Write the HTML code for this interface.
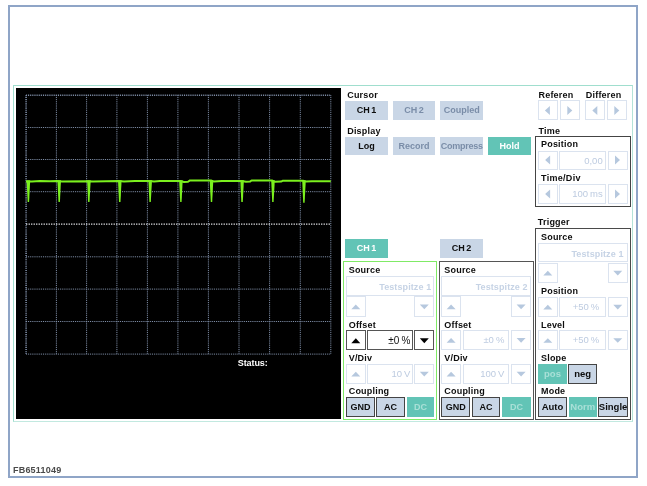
<!DOCTYPE html>
<html><head><meta charset="utf-8"><title>Oscilloscope</title>
<style>
html,body{margin:0;padding:0;background:#fff;}
body{width:647px;height:486px;position:relative;overflow:hidden;font-family:"Liberation Sans",sans-serif;font-weight:bold;}
div{position:absolute;}
.t{white-space:nowrap;letter-spacing:0.2px;}
#w{left:0;top:0;width:647px;height:486px;will-change:transform;}
.b{text-align:center;white-space:nowrap;overflow:hidden;word-spacing:-1px;}
.f{font-weight:normal;white-space:nowrap;overflow:hidden;word-spacing:-0.6px;}
u{text-decoration:underline;}
svg{position:absolute;left:0;top:0;}
</style></head><body><div id="w">
<div style="left:8px;top:5px;width:630px;height:473px;border:2px solid #8fa5c7;box-sizing:border-box;"></div>
<div style="left:13px;top:85px;width:620px;height:337px;border:1px solid #a0dece;border-right-color:#b4e3d8;border-bottom-color:#c2e9e0;box-sizing:border-box;"></div>
<div style="left:16px;top:88px;width:325.2px;height:331.3px;background:#000;"></div>
<div class="t" style="left:347.2px;top:90.98px;font-size:9px;line-height:9px;height:9px;color:#0d0d0d;">Cursor</div>
<div class="b" style="left:345px;top:101px;width:43px;height:18.5px;background:#c9d6e6;color:#0d0d0d;font-size:9px;line-height:19.1px;">CH 1</div>
<div class="b" style="left:392.7px;top:101px;width:42.5px;height:18.5px;background:#c9d6e6;color:#7a8da8;font-size:9px;line-height:19.1px;">CH 2</div>
<div class="b" style="left:440.3px;top:101px;width:43px;height:18.5px;background:#c9d6e6;color:#7a8da8;font-size:9px;line-height:19.1px;">Coupled</div>
<div class="t" style="left:347.2px;top:126.58px;font-size:9px;line-height:9px;height:9px;color:#0d0d0d;">Display</div>
<div class="b" style="left:345px;top:136.5px;width:43px;height:18.2px;background:#c9d6e6;color:#0d0d0d;font-size:9px;line-height:18.8px;">Log</div>
<div class="b" style="left:392.7px;top:136.5px;width:42.5px;height:18.2px;background:#c9d6e6;color:#7a8da8;font-size:9px;line-height:18.8px;">Record</div>
<div class="b" style="left:440.3px;top:136.5px;width:43px;height:18.2px;background:#c9d6e6;color:#7a8da8;font-size:9px;line-height:18.8px;letter-spacing:-0.25px;">Compress</div>
<div class="b" style="left:488px;top:136.5px;width:43px;height:18.2px;background:#62c4b6;color:#fff;font-size:9px;line-height:18.8px;">Hold</div>
<div class="t" style="left:538.5px;top:90.68px;font-size:9px;line-height:9px;height:9px;color:#0d0d0d;">Referen</div>
<div class="t" style="left:585.8px;top:90.68px;font-size:9px;line-height:9px;height:9px;color:#0d0d0d;">Differen</div>
<div style="left:537.6px;top:100.4px;width:20.2px;height:20px;background:#fff;box-shadow:inset 0 0 0 1px #dbe3ef;"></div>
<div style="left:560.2px;top:100.4px;width:19.8px;height:20px;background:#fff;box-shadow:inset 0 0 0 1px #dbe3ef;"></div>
<div style="left:585.3px;top:100.4px;width:19.6px;height:20px;background:#fff;box-shadow:inset 0 0 0 1px #dbe3ef;"></div>
<div style="left:607.4px;top:100.4px;width:19.4px;height:20px;background:#fff;box-shadow:inset 0 0 0 1px #dbe3ef;"></div>
<div class="t" style="left:538.5px;top:126.78px;font-size:9px;line-height:9px;height:9px;color:#0d0d0d;">Time</div>
<div style="left:535px;top:136px;width:95.7px;height:70.8px;box-shadow:inset 0 0 0 1px #444;"></div>
<div class="t" style="left:541px;top:140.28px;font-size:9px;line-height:9px;height:9px;color:#0d0d0d;">Position</div>
<div style="left:538px;top:150.5px;width:19.8px;height:19px;background:#fff;box-shadow:inset 0 0 0 1px #dbe3ef;"></div>
<div class="f" style="left:559.4px;top:150.5px;width:46.3px;height:19px;background:#fff;box-shadow:inset 0 0 0 1px #dbe3ef;color:#bdcbe0;font-size:9.5px;line-height:19.4px;text-align:right;padding-right:3px;box-sizing:border-box;">0,00</div>
<div style="left:608px;top:150.5px;width:19.6px;height:19px;background:#fff;box-shadow:inset 0 0 0 1px #dbe3ef;"></div>
<div class="t" style="left:541px;top:174.18px;font-size:9px;line-height:9px;height:9px;color:#0d0d0d;letter-spacing:0.3px;">Time/Div</div>
<div style="left:538px;top:184.3px;width:19.8px;height:19.3px;background:#fff;box-shadow:inset 0 0 0 1px #dbe3ef;"></div>
<div class="f" style="left:559.4px;top:184.3px;width:46.3px;height:19.3px;background:#fff;box-shadow:inset 0 0 0 1px #dbe3ef;color:#bdcbe0;font-size:9.5px;line-height:19.7px;text-align:right;padding-right:3px;box-sizing:border-box;">100 ms</div>
<div style="left:608px;top:184.3px;width:19.6px;height:19.3px;background:#fff;box-shadow:inset 0 0 0 1px #dbe3ef;"></div>
<div class="t" style="left:537.8px;top:218.28px;font-size:9px;line-height:9px;height:9px;color:#0d0d0d;">Trigger</div>
<div style="left:535px;top:228px;width:96px;height:191.7px;box-shadow:inset 0 0 0 1px #4a4a4a;"></div>
<div class="t" style="left:541px;top:232.88px;font-size:9px;line-height:9px;height:9px;color:#0d0d0d;">Source</div>
<div class="f" style="left:538px;top:243px;width:89.5px;height:19.3px;background:#fff;box-shadow:inset 0 0 0 1px #dbe3ef;color:#bdcbe0;font-size:9px;line-height:19.7px;text-align:right;padding-right:4px;box-sizing:border-box;font-weight:bold;color:#c6d3e5;word-spacing:0;letter-spacing:0.1px;line-height:23px;">Testspitze 1</div>
<div style="left:538px;top:263px;width:19.6px;height:20px;background:#fff;box-shadow:inset 0 0 0 1px #dbe3ef;"></div>
<div style="left:608px;top:263px;width:19.5px;height:20px;background:#fff;box-shadow:inset 0 0 0 1px #dbe3ef;"></div>
<div class="t" style="left:541px;top:287.28px;font-size:9px;line-height:9px;height:9px;color:#0d0d0d;">Position</div>
<div style="left:538px;top:297px;width:19.6px;height:20px;background:#fff;box-shadow:inset 0 0 0 1px #dbe3ef;"></div>
<div class="f" style="left:559.4px;top:297px;width:46.4px;height:20px;background:#fff;box-shadow:inset 0 0 0 1px #dbe3ef;color:#bdcbe0;font-size:9.5px;line-height:20.4px;text-align:right;padding-right:6.5px;box-sizing:border-box;">+50 %</div>
<div style="left:608px;top:297px;width:19.5px;height:20px;background:#fff;box-shadow:inset 0 0 0 1px #dbe3ef;"></div>
<div class="t" style="left:541px;top:321.08px;font-size:9px;line-height:9px;height:9px;color:#0d0d0d;">Level</div>
<div style="left:538px;top:330.4px;width:19.6px;height:20px;background:#fff;box-shadow:inset 0 0 0 1px #dbe3ef;"></div>
<div class="f" style="left:559.4px;top:330.4px;width:46.4px;height:20px;background:#fff;box-shadow:inset 0 0 0 1px #dbe3ef;color:#bdcbe0;font-size:9.5px;line-height:20.4px;text-align:right;padding-right:6.5px;box-sizing:border-box;">+50 %</div>
<div style="left:608px;top:330.4px;width:19.5px;height:20px;background:#fff;box-shadow:inset 0 0 0 1px #dbe3ef;"></div>
<div class="t" style="left:541px;top:353.88px;font-size:9px;line-height:9px;height:9px;color:#0d0d0d;">Slope</div>
<div class="b" style="left:538.2px;top:364.3px;width:28.6px;height:19.6px;background:#62c4b6;color:#a9e0d7;font-size:9.5px;line-height:20.6px;">pos</div>
<div class="b" style="left:568.3px;top:364.3px;width:28.6px;height:19.6px;background:#c9d6e6;color:#0d0d0d;font-size:9.5px;line-height:20.6px;box-shadow:inset 0 0 0 1px #444;">neg</div>
<div class="t" style="left:541px;top:387.28px;font-size:9px;line-height:9px;height:9px;color:#0d0d0d;">Mode</div>
<div class="b" style="left:538.2px;top:397.3px;width:28.7px;height:20px;background:#c9d6e6;color:#0d0d0d;font-size:9.5px;line-height:20.6px;box-shadow:inset 0 0 0 1px #444;">Auto</div>
<div class="b" style="left:568.6px;top:397.3px;width:28.2px;height:20px;background:#62c4b6;color:#a9e0d7;font-size:9.5px;line-height:20.6px;">Norm</div>
<div class="b" style="left:598.4px;top:397.3px;width:29.4px;height:20px;background:#c9d6e6;color:#0d0d0d;font-size:9.5px;line-height:20.6px;box-shadow:inset 0 0 0 1px #444;">Single</div>
<div class="b" style="left:345px;top:239px;width:43px;height:18.8px;background:#62c4b6;color:#fff;font-size:9px;line-height:18.8px;">CH 1</div>
<div class="b" style="left:440.2px;top:239px;width:42.6px;height:18.8px;background:#c9d6e6;color:#0d0d0d;font-size:9px;line-height:18.8px;">CH 2</div>
<div style="left:343.2px;top:261.3px;width:94px;height:158.6px;box-shadow:inset 0 0 0 1px #80ea66;"></div>
<div class="t" style="left:348.7px;top:266.08px;font-size:9px;line-height:9px;height:9px;color:#0d0d0d;">Source</div>
<div class="f" style="left:346px;top:276.2px;width:88.3px;height:19.8px;background:#fff;box-shadow:inset 0 0 0 1px #dbe3ef;color:#bdcbe0;font-size:9px;line-height:20.2px;text-align:right;padding-right:3.0px;box-sizing:border-box;font-weight:bold;color:#c6d3e5;word-spacing:0;letter-spacing:0.1px;line-height:22px;">Testspitze 1</div>
<div style="left:346px;top:296.4px;width:19.6px;height:20.6px;background:#fff;box-shadow:inset 0 0 0 1px #dbe3ef;"></div>
<div style="left:414.4px;top:296.4px;width:19.8px;height:20.6px;background:#fff;box-shadow:inset 0 0 0 1px #dbe3ef;"></div>
<div class="t" style="left:348.7px;top:320.88px;font-size:9px;line-height:9px;height:9px;color:#0d0d0d;">Offset</div>
<div style="left:346px;top:330.2px;width:19.6px;height:20px;background:#fff;box-shadow:inset 0 0 0 1px #555;"></div>
<div class="f" style="left:367.4px;top:330.2px;width:45.6px;height:20px;background:#fff;box-shadow:inset 0 0 0 1px #555;color:#111;font-size:10px;line-height:22.2px;text-align:right;padding-right:2.6px;box-sizing:border-box;">±0 %</div>
<div style="left:414.4px;top:330.2px;width:19.8px;height:20px;background:#fff;box-shadow:inset 0 0 0 1px #555;"></div>
<div class="t" style="left:348.7px;top:353.88px;font-size:9px;line-height:9px;height:9px;color:#0d0d0d;">V/Div</div>
<div style="left:346px;top:364px;width:19.6px;height:20px;background:#fff;box-shadow:inset 0 0 0 1px #dbe3ef;"></div>
<div class="f" style="left:367.4px;top:364px;width:45.6px;height:20px;background:#fff;box-shadow:inset 0 0 0 1px #dbe3ef;color:#bdcbe0;font-size:9.5px;line-height:20.4px;text-align:right;padding-right:2.6px;box-sizing:border-box;">10 V</div>
<div style="left:414.4px;top:364px;width:19.8px;height:20px;background:#fff;box-shadow:inset 0 0 0 1px #dbe3ef;"></div>
<div class="t" style="left:348.7px;top:387.28px;font-size:9px;line-height:9px;height:9px;color:#0d0d0d;">Coupling</div>
<div class="b" style="left:346px;top:397.2px;width:28.8px;height:19.8px;background:#c9d6e6;color:#0d0d0d;font-size:9px;line-height:20.8px;box-shadow:inset 0 0 0 1px #444;">GND</div>
<div class="b" style="left:376.2px;top:397.2px;width:28.8px;height:19.8px;background:#c9d6e6;color:#0d0d0d;font-size:9px;line-height:20.8px;box-shadow:inset 0 0 0 1px #444;">AC</div>
<div class="b" style="left:406.8px;top:397.2px;width:27.5px;height:19.8px;background:#62c4b6;color:#a9e0d7;font-size:9px;line-height:20.8px;">DC</div>
<div style="left:438.8px;top:261.3px;width:94.8px;height:158.6px;box-shadow:inset 0 0 0 1px #555;"></div>
<div class="t" style="left:444.3px;top:266.08px;font-size:9px;line-height:9px;height:9px;color:#0d0d0d;">Source</div>
<div class="f" style="left:441.4px;top:276.2px;width:89.6px;height:19.8px;background:#fff;box-shadow:inset 0 0 0 1px #dbe3ef;color:#bdcbe0;font-size:9px;line-height:20.2px;text-align:right;padding-right:3.3px;box-sizing:border-box;font-weight:bold;color:#c6d3e5;word-spacing:0;letter-spacing:0.1px;line-height:22px;">Testspitze 2</div>
<div style="left:441.4px;top:296.4px;width:19.4px;height:20.6px;background:#fff;box-shadow:inset 0 0 0 1px #dbe3ef;"></div>
<div style="left:511.3px;top:296.4px;width:19.6px;height:20.6px;background:#fff;box-shadow:inset 0 0 0 1px #dbe3ef;"></div>
<div class="t" style="left:444.3px;top:320.88px;font-size:9px;line-height:9px;height:9px;color:#0d0d0d;">Offset</div>
<div style="left:441.4px;top:330.2px;width:19.4px;height:20px;background:#fff;box-shadow:inset 0 0 0 1px #dbe3ef;"></div>
<div class="f" style="left:463px;top:330.2px;width:46.2px;height:20px;background:#fff;box-shadow:inset 0 0 0 1px #dbe3ef;color:#bdcbe0;font-size:9.5px;line-height:20.4px;text-align:right;padding-right:4.8px;box-sizing:border-box;">±0 %</div>
<div style="left:511.3px;top:330.2px;width:19.6px;height:20px;background:#fff;box-shadow:inset 0 0 0 1px #dbe3ef;"></div>
<div class="t" style="left:444.3px;top:353.88px;font-size:9px;line-height:9px;height:9px;color:#0d0d0d;">V/Div</div>
<div style="left:441.4px;top:364px;width:19.4px;height:20px;background:#fff;box-shadow:inset 0 0 0 1px #dbe3ef;"></div>
<div class="f" style="left:463px;top:364px;width:46.2px;height:20px;background:#fff;box-shadow:inset 0 0 0 1px #dbe3ef;color:#bdcbe0;font-size:9.5px;line-height:20.4px;text-align:right;padding-right:4.8px;box-sizing:border-box;">100 V</div>
<div style="left:511.3px;top:364px;width:19.6px;height:20px;background:#fff;box-shadow:inset 0 0 0 1px #dbe3ef;"></div>
<div class="t" style="left:444.3px;top:387.28px;font-size:9px;line-height:9px;height:9px;color:#0d0d0d;">Coupling</div>
<div class="b" style="left:441.4px;top:397.2px;width:28.8px;height:19.8px;background:#c9d6e6;color:#0d0d0d;font-size:9px;line-height:20.8px;box-shadow:inset 0 0 0 1px #444;">GND</div>
<div class="b" style="left:471.59999999999997px;top:397.2px;width:28.8px;height:19.8px;background:#c9d6e6;color:#0d0d0d;font-size:9px;line-height:20.8px;box-shadow:inset 0 0 0 1px #444;">AC</div>
<div class="b" style="left:502.2px;top:397.2px;width:28.80000000000001px;height:19.8px;background:#62c4b6;color:#a9e0d7;font-size:9px;line-height:20.8px;">DC</div>
<div class="t" style="left:237.8px;top:359.08px;font-size:9px;line-height:9px;height:9px;color:#fff;letter-spacing:-0.1px;">Status:</div>
<div class="t" style="left:13px;top:466.28px;font-size:9px;line-height:9px;height:9px;color:#4a4a4a;letter-spacing:0.2px;">FB6511049</div>
<svg width="647" height="486" viewBox="0 0 647 486">
<line x1="26.10" y1="95.2" x2="26.10" y2="354.1" stroke="#8797b2" stroke-width="1.5" stroke-dasharray="0.94 0.94"/>
<line x1="56.40" y1="95.2" x2="56.40" y2="354.1" stroke="#8797b2" stroke-width="1.0" stroke-dasharray="0.94 0.94"/>
<line x1="86.60" y1="95.2" x2="86.60" y2="354.1" stroke="#8797b2" stroke-width="1.0" stroke-dasharray="0.94 0.94"/>
<line x1="116.90" y1="95.2" x2="116.90" y2="354.1" stroke="#8797b2" stroke-width="1.0" stroke-dasharray="0.94 0.94"/>
<line x1="147.40" y1="95.2" x2="147.40" y2="354.1" stroke="#8797b2" stroke-width="1.0" stroke-dasharray="0.94 0.94"/>
<line x1="177.90" y1="95.2" x2="177.90" y2="354.1" stroke="#8797b2" stroke-width="1.0" stroke-dasharray="0.94 0.94"/>
<line x1="208.40" y1="95.2" x2="208.40" y2="354.1" stroke="#8797b2" stroke-width="1.0" stroke-dasharray="0.94 0.94"/>
<line x1="239.00" y1="95.2" x2="239.00" y2="354.1" stroke="#8797b2" stroke-width="1.0" stroke-dasharray="0.94 0.94"/>
<line x1="269.60" y1="95.2" x2="269.60" y2="354.1" stroke="#8797b2" stroke-width="1.0" stroke-dasharray="0.94 0.94"/>
<line x1="300.30" y1="95.2" x2="300.30" y2="354.1" stroke="#8797b2" stroke-width="1.0" stroke-dasharray="0.94 0.94"/>
<line x1="330.80" y1="95.2" x2="330.80" y2="354.1" stroke="#8797b2" stroke-width="1.0" stroke-dasharray="0.94 0.94"/>
<line x1="26.1" y1="95.20" x2="330.8" y2="95.20" stroke="#8797b2" stroke-width="1.4" stroke-dasharray="0.94 0.94"/>
<line x1="26.1" y1="127.50" x2="330.8" y2="127.50" stroke="#8797b2" stroke-width="1.0" stroke-dasharray="0.94 0.94"/>
<line x1="26.1" y1="159.50" x2="330.8" y2="159.50" stroke="#8797b2" stroke-width="1.0" stroke-dasharray="0.94 0.94"/>
<line x1="26.1" y1="191.70" x2="330.8" y2="191.70" stroke="#8797b2" stroke-width="1.0" stroke-dasharray="0.94 0.94"/>
<line x1="26.1" y1="224.10" x2="330.8" y2="224.10" stroke="#f2f4f8" stroke-width="1.2" stroke-dasharray="1.25 1.25"/>
<line x1="26.1" y1="256.80" x2="330.8" y2="256.80" stroke="#8797b2" stroke-width="1.0" stroke-dasharray="0.94 0.94"/>
<line x1="26.1" y1="289.10" x2="330.8" y2="289.10" stroke="#8797b2" stroke-width="1.0" stroke-dasharray="0.94 0.94"/>
<line x1="26.1" y1="321.50" x2="330.8" y2="321.50" stroke="#8797b2" stroke-width="1.0" stroke-dasharray="0.94 0.94"/>
<line x1="26.1" y1="354.10" x2="330.8" y2="354.10" stroke="#8797b2" stroke-width="1.0" stroke-dasharray="0.94 0.94"/>
<path d="M26,181.4 L32,181.6 L40,181.0 L50,181.3 L57,181.0 L62,181.5 L88,181.2 L93,181.5 L119,181.1 L124,181.4 L135,181.0 L150,181.0 L154,181.6 L160,181.1 L180,181.0 L184,182.0 L188,181.8 L190,180.4 L211,180.4 L214,181.6 L222,181.0 L242,181.0 L246,181.8 L250,181.6 L251.5,180.5 L272,180.5 L275,181.8 L281,181.6 L282.5,180.8 L303,180.8 L306,181.6 L312,181.2 L330.8,181.2" fill="none" stroke="#7bf01e" stroke-width="2.0" stroke-linejoin="round"/>
<polygon points="26.6,180.2 30.2,180.2 29.1,202.0 27.7,202.0" fill="#7bf01e"/>
<polygon points="57.4,180.2 61.0,180.2 59.9,202.0 58.5,202.0" fill="#7bf01e"/>
<polygon points="87.1,180.2 90.7,180.2 89.5,202.0 88.1,202.0" fill="#7bf01e"/>
<polygon points="118.0,180.2 121.6,180.2 120.5,202.0 119.0,202.0" fill="#7bf01e"/>
<polygon points="148.4,180.2 152.0,180.2 150.8,202.0 149.4,202.0" fill="#7bf01e"/>
<polygon points="179.1,180.2 182.7,180.2 181.6,202.0 180.2,202.0" fill="#7bf01e"/>
<polygon points="209.7,180.2 213.3,180.2 212.2,202.0 210.8,202.0" fill="#7bf01e"/>
<polygon points="240.3,180.2 243.9,180.2 242.8,202.0 241.3,202.0" fill="#7bf01e"/>
<polygon points="271.2,180.2 274.8,180.2 273.6,202.0 272.2,202.0" fill="#7bf01e"/>
<polygon points="302.2,180.2 305.8,180.2 304.6,202.7 303.2,202.7" fill="#7bf01e"/>
<polygon points="549.90,105.90 549.90,114.90 544.90,110.40" fill="#b6c8de"/>
<polygon points="567.30,105.90 567.30,114.90 572.30,110.40" fill="#b6c8de"/>
<polygon points="597.30,105.90 597.30,114.90 592.30,110.40" fill="#b6c8de"/>
<polygon points="614.30,105.90 614.30,114.90 619.30,110.40" fill="#b6c8de"/>
<polygon points="550.10,155.50 550.10,164.50 545.10,160.00" fill="#b6c8de"/>
<polygon points="615.00,155.50 615.00,164.50 620.00,160.00" fill="#b6c8de"/>
<polygon points="550.10,189.45 550.10,198.45 545.10,193.95" fill="#b6c8de"/>
<polygon points="615.00,189.45 615.00,198.45 620.00,193.95" fill="#b6c8de"/>
<polygon points="543.30,275.45 552.30,275.45 547.80,270.85" fill="#b6c8de"/>
<polygon points="613.25,270.85 622.25,270.85 617.75,275.45" fill="#b6c8de"/>
<polygon points="543.30,309.45 552.30,309.45 547.80,304.85" fill="#b6c8de"/>
<polygon points="613.25,304.85 622.25,304.85 617.75,309.45" fill="#b6c8de"/>
<polygon points="543.30,342.85 552.30,342.85 547.80,338.25" fill="#b6c8de"/>
<polygon points="613.25,338.25 622.25,338.25 617.75,342.85" fill="#b6c8de"/>
<polygon points="351.30,309.15 360.30,309.15 355.80,304.55" fill="#b6c8de"/>
<polygon points="419.80,304.55 428.80,304.55 424.30,309.15" fill="#b6c8de"/>
<polygon points="351.30,343.20 360.30,343.20 355.80,338.20" fill="#000"/>
<polygon points="419.80,338.20 428.80,338.20 424.30,343.20" fill="#000"/>
<polygon points="351.30,376.45 360.30,376.45 355.80,371.85" fill="#b6c8de"/>
<polygon points="419.80,371.85 428.80,371.85 424.30,376.45" fill="#b6c8de"/>
<polygon points="446.60,309.15 455.60,309.15 451.10,304.55" fill="#b6c8de"/>
<polygon points="516.60,304.55 525.60,304.55 521.10,309.15" fill="#b6c8de"/>
<polygon points="446.60,342.65 455.60,342.65 451.10,338.05" fill="#b6c8de"/>
<polygon points="516.60,338.05 525.60,338.05 521.10,342.65" fill="#b6c8de"/>
<polygon points="446.60,376.45 455.60,376.45 451.10,371.85" fill="#b6c8de"/>
<polygon points="516.60,371.85 525.60,371.85 521.10,376.45" fill="#b6c8de"/>
</svg>
</div></body></html>
